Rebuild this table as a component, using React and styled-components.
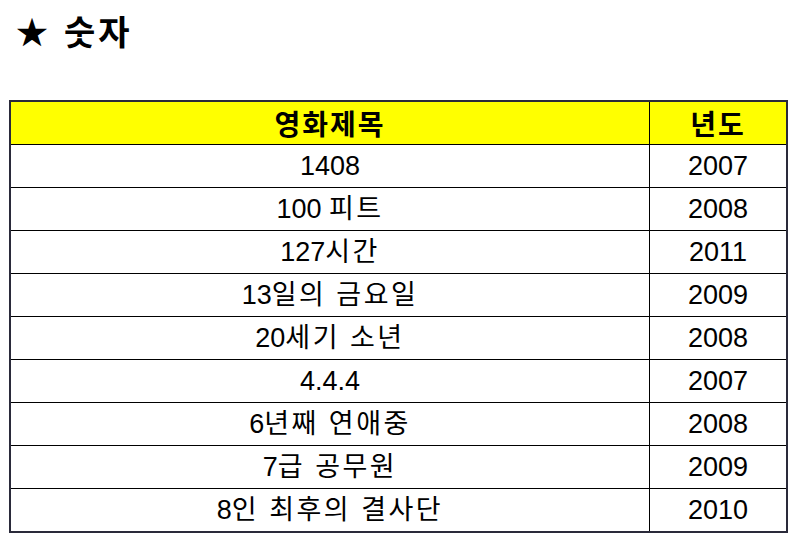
import React from 'react';
import styled, { createGlobalStyle } from 'styled-components';

const GlobalStyle = createGlobalStyle`
  body {
    margin: 0;
    background: #fff;
    font-family: "Liberation Sans", "Noto Sans CJK KR", sans-serif;
    color: #000;
  }
`;

const Page = styled.div`
  padding: 12px 0 0 9px;
  width: 800px;
  height: 542px;
  box-sizing: border-box;
`;

const Title = styled.h1`
  margin: 0 0 46px 7px;
  font-size: 34px;
  font-weight: bold;
  line-height: 42px;
  display: flex;
  align-items: center;
  gap: 16px;
`;

const Star = styled.span`
  font-size: 32px;
`;

const TitleText = styled.span`
  letter-spacing: 3px;
`;

const Table = styled.table`
  border-collapse: collapse;
  width: 779px;
  table-layout: fixed;
  border: 2px solid #2a2a3a;
`;

const HeadCell = styled.th`
  background: #ffff00;
  height: 42px;
  padding: 0;
  font-size: 28px;
  font-weight: bold;
  letter-spacing: 2px;
  border: 1px solid #000;
  text-align: center;
  width: ${p => p.$w || 'auto'};
`;

const Cell = styled.td`
  height: 42px;
  padding: 0;
  font-size: 27px;
  border: 1px solid #000;
  text-align: center;
  line-height: 42px;
`;

const Hangul = styled.span`
  letter-spacing: 2.5px;
`;

const movies = [
  ['1408', '2007'],
  ['100 피트', '2008'],
  ['127시간', '2011'],
  ['13일의 금요일', '2009'],
  ['20세기 소년', '2008'],
  ['4.4.4', '2007'],
  ['6년째 연애중', '2008'],
  ['7급 공무원', '2009'],
  ['8인 최후의 결사단', '2010'],
];

// wrap runs of Hangul (and the spaces between them) so they get Malgun-like spacing
function splitHangul(text) {
  return text.split(/([\uAC00-\uD7A3][\uAC00-\uD7A3 ]*)/).filter(Boolean).map((part, i) =>
    /[\uAC00-\uD7A3]/.test(part) ? <Hangul key={i}>{part}</Hangul> : part
  );
}

export default function App() {
  return (
    <Page>
      <GlobalStyle />
      <Title>
        <Star>★</Star>
        <TitleText>숫자</TitleText>
      </Title>
      <Table>
        <thead>
          <tr>
            <HeadCell $w="638px">영화제목</HeadCell>
            <HeadCell>년도</HeadCell>
          </tr>
        </thead>
        <tbody>
          {movies.map(([title, year]) => (
            <tr key={title}>
              <Cell>{splitHangul(title)}</Cell>
              <Cell>{year}</Cell>
            </tr>
          ))}
        </tbody>
      </Table>
    </Page>
  );
}
